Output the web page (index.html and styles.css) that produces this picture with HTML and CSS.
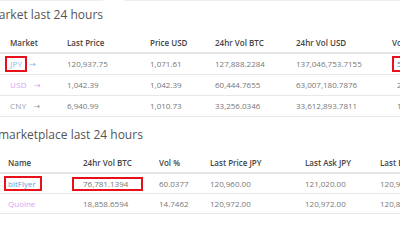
FILE: index.html
```html
<!DOCTYPE html>
<html>
<head>
<meta charset="utf-8">
<link rel="stylesheet" href="styles.css">
</head>
<body>
<div class="topbar"><div class="seg seg-a"></div><div class="seg seg-b"></div></div>
<h2 class="title title-1">Market last 24 hours</h2>
<table class="grid grid-1">
  <colgroup><col class="c60"><col class="c83"><col class="c65"><col class="c81"><col class="c96"><col class="c80"></colgroup>
  <thead>
    <tr><th class="first">Market</th><th>Last Price</th><th>Price USD</th><th>24hr Vol BTC</th><th>24hr Vol USD</th><th>Vol %</th></tr>
  </thead>
  <tbody>
    <tr><td class="first"><span class="cur jpy boxed">JPY</span><span class="arrow jpy">→</span></td><td>120,937.75</td><td>1,071.61</td><td>127,888.2284</td><td>137,046,753.7155</td><td><span class="boxed pct">59.8611</span></td></tr>
    <tr><td class="first"><span class="cur usd">USD</span><span class="arrow usd">→</span></td><td>1,042.39</td><td>1,042.39</td><td>60,444.7655</td><td>63,007,180.7876</td><td><span class="pct2">28.2928</span></td></tr>
    <tr><td class="first"><span class="cur cny">CNY</span><span class="arrow cny">→</span></td><td>6,940.99</td><td>1,010.73</td><td>33,256.0346</td><td>33,612,893.7811</td><td><span class="pct2">15.5663</span></td></tr>
  </tbody>
</table>
<h2 class="title title-2">marketplace last 24 hours</h2>
<table class="grid grid-2">
  <colgroup><col class="c76"><col class="c76"><col class="c51"><col class="c95"><col class="c75"><col class="c80"></colgroup>
  <thead>
    <tr><th class="first2">Name</th><th>24hr Vol BTC</th><th>Vol %</th><th>Last Price JPY</th><th>Last Ask JPY</th><th>Last Bid JPY</th></tr>
  </thead>
  <tbody>
    <tr><td class="first2"><span class="ex bf boxed">bitFlyer</span></td><td><span class="vol boxed">76,781.1394</span></td><td>60.0377</td><td>120,960.00</td><td>121,020.00</td><td>120,940.00</td></tr>
    <tr><td class="first2"><span class="ex qu">Quoine</span></td><td>18,858.6594</td><td>14.7462</td><td>120,972.00</td><td>120,972.00</td><td>120,850.00</td></tr>
  </tbody>
</table>
</body>
</html>
```
FILE: styles.css
```css
html, body {
  margin: 0;
  padding: 0;
  overflow: hidden;
  background: #fff;
}
body {
  width: 400px;
  height: 240px;
  font-family: "Open Sans", "DejaVu Sans", sans-serif;
  color: #777;
}
.topbar {
  display: flex;
  height: 1px;
}
.seg { height: 1px; background: #eeeeee; }
.seg-a { width: 103px; }
.seg-b { margin-left: 21px; flex: 1; }

.title {
  font-size: 12px;
  font-weight: 400;
  line-height: 16px;
  color: #555;
  margin: 0;
  white-space: nowrap;
}
.title-1 { margin: 6px 0 0 -12px; }
.title-2 { margin: 10px 0 0 -2px; }

.grid {
  border-collapse: collapse;
  table-layout: fixed;
  width: 465px;
  font-size: 8px;
  white-space: nowrap;
}
.grid-1 { margin-top: 9px; }
.grid-2 { margin-top: 9px; width: 453px; }

.c60 { width: 60px; }
.c83 { width: 83px; }
.c65 { width: 65px; }
.c81 { width: 81px; }
.c96 { width: 96px; }
.c80 { width: 80px; }
.c76 { width: 76px; }
.c51 { width: 51px; }
.c95 { width: 95px; }
.c75 { width: 75px; }

.grid th {
  text-align: left;
  font-weight: 600;
  color: #444;
  height: 19px;
  padding: 1px 0 0 7px;
  line-height: 11px;
  border-bottom: 2px solid #e4e4e4;
  overflow: hidden;
}
.grid td {
  text-align: left;
  height: 19px;
  padding: 0 0 1px 7px;
  line-height: 11px;
  border-bottom: 1px solid #e8e8e8;
  overflow: visible;
}
.grid-2 td { height: 18px; }
.grid th.first, .grid td.first { padding-left: 10px; }
.grid th.first2, .grid td.first2 { padding-left: 8px; }

.cur { letter-spacing: 0.3px; }
.jpy { color: #88b6e6; }
.usd { color: #d7a2f3; }
.cny { color: #999; }
.arrow { margin-left: 7px; font-family: "DejaVu Sans", sans-serif; font-size: 8px; }

.boxed {
  display: inline-block;
  outline: 2px solid #e8101a;
  line-height: 12px;
}
.cur.boxed { padding: 0 3px; margin-left: -3px; }
.cur.boxed + .arrow { margin-left: 4px; }
.pct { padding: 0 3px; margin-left: 2px; }
.pct2 { margin-left: 5px; }

.ex.bf { color: #5fa2de; padding: 0 4px 0 2px; margin-left: -2px; line-height: 11px; }
.qu { color: #d7a2f3; }
.vol { padding: 0 13px 0 9px; margin-left: -9px; line-height: 10px; }
```
